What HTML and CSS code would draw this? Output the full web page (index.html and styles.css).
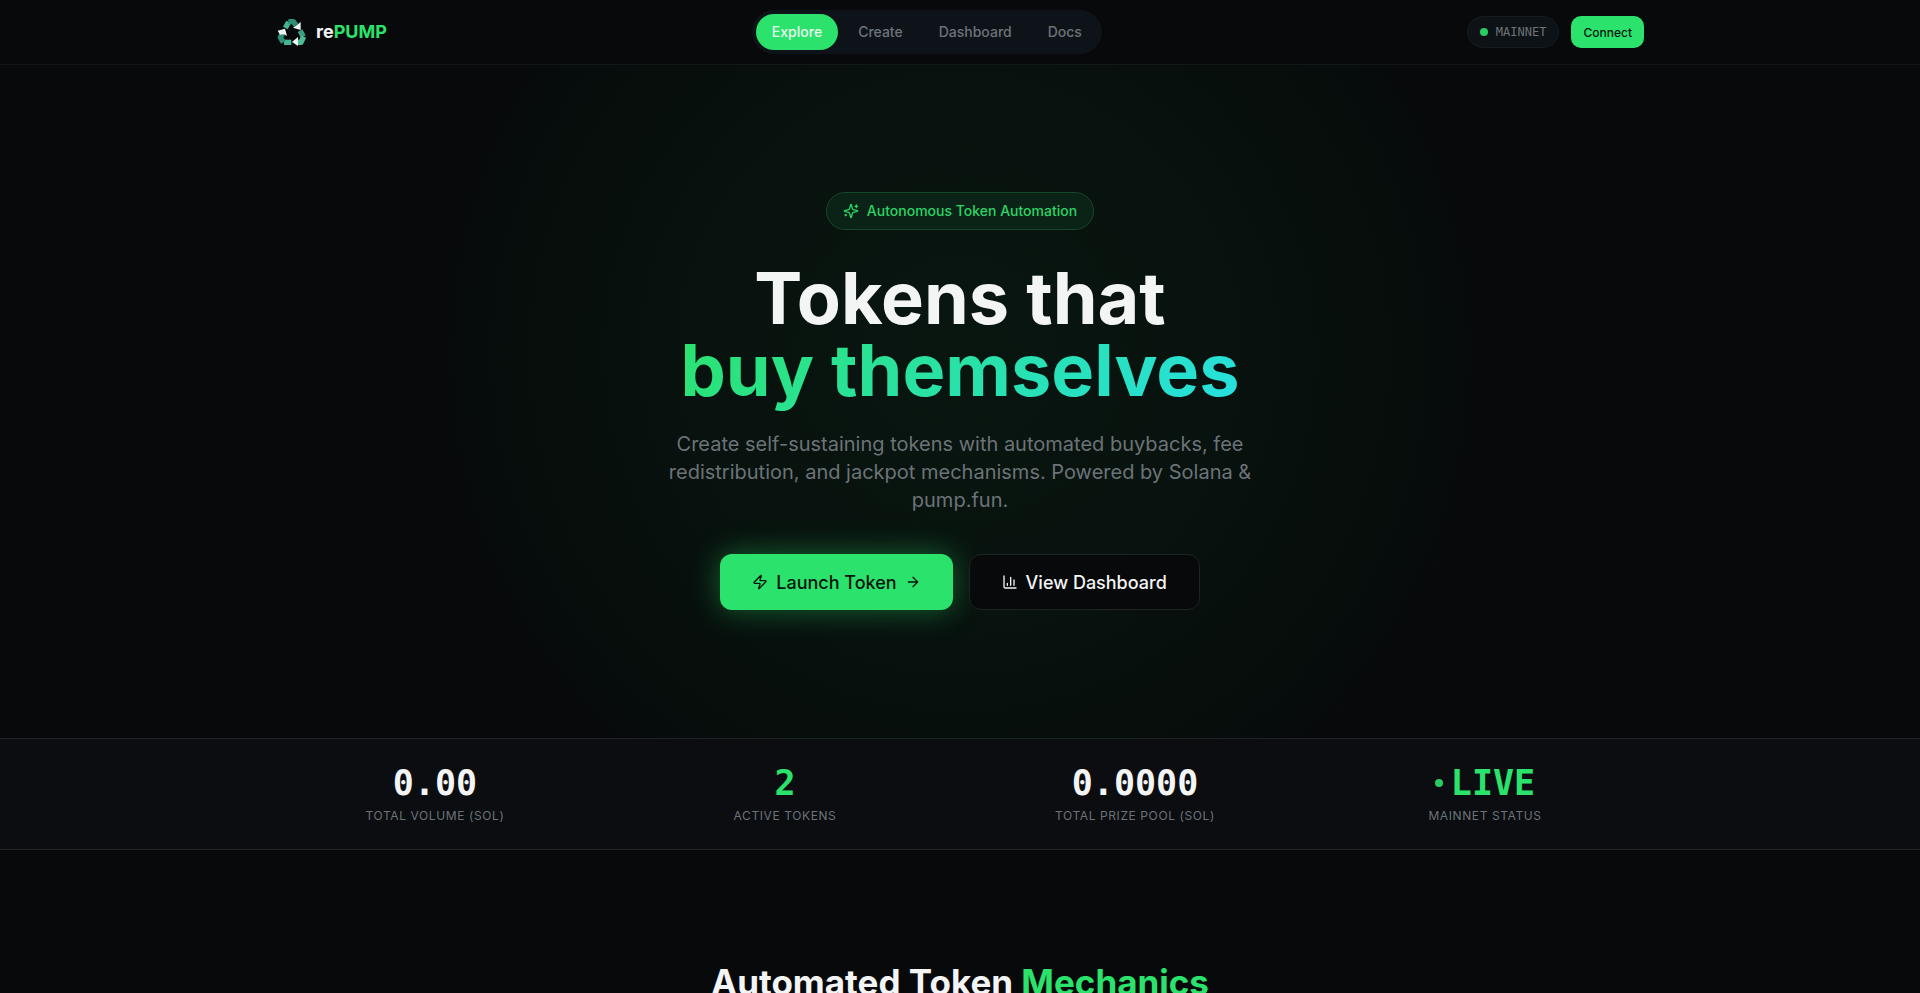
FILE: index.html
```html
<!DOCTYPE html>
<html lang="en">
<head>
<meta charset="utf-8">
<meta name="viewport" content="width=device-width, initial-scale=1">
<title>rePUMP</title>
<link rel="stylesheet" href="styles.css">
</head>
<body>
<header class="site-header">
  <div class="container header-row">
    <a class="logo" href="#">
      <svg class="logo-mark" viewBox="18 18 96 96" aria-hidden="true">
        <g fill="none" stroke-width="16" stroke-linejoin="round">
          <path d="M46 54 56 36" stroke="#46b595"/>
          <path d="M55 35H70L78 46" stroke="#2d8f76"/>
          <path d="M90 62 100 80" stroke="#3a9f84"/>
          <path d="M101 80 93 97H84" stroke="#4dbd98"/>
          <path d="M64 97H42" stroke="#46b595"/>
          <path d="M40 97 31 82 38 70" stroke="#2d8f76"/>
        </g>
        <g fill="#eef5f2">
          <path d="M92 36 92 60 69 53 78 47Z"/>
          <path d="M23 62 45 56 51 78 42 73 30 74Z"/>
          <path d="M84 81V108L66 96Z"/>
        </g>
      </svg>
      <span class="logo-text">re<span class="accent">PUMP</span></span>
    </a>
    <nav class="nav">
      <a class="nav-link active" href="#">Explore</a>
      <a class="nav-link" href="#">Create</a>
      <a class="nav-link" href="#">Dashboard</a>
      <a class="nav-link" href="#">Docs</a>
    </nav>
    <div class="header-actions">
      <div class="network"><span class="dot"></span>MAINNET</div>
      <button class="connect" type="button">Connect</button>
    </div>
  </div>
</header>

<main>
  <section class="hero">
    <div class="badge">
      <svg class="icon" viewBox="0 0 24 24" aria-hidden="true"><path d="M9.937 15.5A2 2 0 0 0 8.5 14.063l-6.135-1.582a.5.5 0 0 1 0-.962L8.5 9.936A2 2 0 0 0 9.937 8.5l1.582-6.135a.5.5 0 0 1 .963 0L14.063 8.5A2 2 0 0 0 15.5 9.937l6.135 1.581a.5.5 0 0 1 0 .964L15.5 14.063a2 2 0 0 0-1.437 1.437l-1.582 6.135a.5.5 0 0 1-.963 0z"/><path d="M20 3v4M22 5h-4M4 17v2M5 18H3"/></svg>
      <span>Autonomous Token Automation</span>
    </div>
    <h1 class="title">Tokens that<br><span class="gradient">buy themselves</span></h1>
    <p class="lead">Create self-sustaining tokens with automated buybacks, fee redistribution, and jackpot mechanisms. Powered by Solana &amp; pump.fun.</p>
    <div class="cta">
      <button class="btn primary" type="button">
        <svg class="icon" viewBox="0 0 24 24" aria-hidden="true"><path d="M4 14a1 1 0 0 1-.78-1.63l9.9-10.2a.5.5 0 0 1 .86.46l-1.92 6.02A1 1 0 0 0 13 10h7a1 1 0 0 1 .78 1.63l-9.9 10.2a.5.5 0 0 1-.86-.46l1.92-6.02A1 1 0 0 0 11 14z"/></svg>
        Launch Token
        <svg class="icon" viewBox="0 0 24 24" aria-hidden="true"><path d="M5 12h14M12 5l7 7-7 7"/></svg>
      </button>
      <button class="btn outline" type="button">
        <svg class="icon" viewBox="0 0 24 24" aria-hidden="true"><path d="M3 3v16a2 2 0 0 0 2 2h16M18 17V9M13 17V5M8 17v-3"/></svg>
        View Dashboard
      </button>
    </div>
  </section>

  <section class="stats">
    <div class="container stats-grid">
      <div><div class="value">0.00</div><div class="label">Total Volume (SOL)</div></div>
      <div><div class="value accent">2</div><div class="label">Active Tokens</div></div>
      <div><div class="value">0.0000</div><div class="label">Total Prize Pool (SOL)</div></div>
      <div><div class="value accent"><span class="dot"></span>LIVE</div><div class="label">Mainnet Status</div></div>
    </div>
  </section>

  <section class="mechanics">
    <h2 class="section-title">Automated Token <span class="accent">Mechanics</span></h2>
  </section>
</main>
</body>
</html>
```
FILE: styles.css
```css
:root {
  --bg: #08090b;
  --text: #f3f4f4;
  --muted: #6c7378;
  --green: #2be36c;
  --mono: "DejaVu Sans Mono", monospace;
}

* { box-sizing: border-box; }

body {
  margin: 0;
  background: var(--bg);
  color: var(--text);
  font-family: Inter, sans-serif;
  overflow-x: hidden;
}

a { color: inherit; text-decoration: none; }
button { font-family: inherit; cursor: pointer; }

.accent { color: var(--green); }

.icon {
  width: 16px;
  height: 16px;
  flex: none;
  fill: none;
  stroke: currentColor;
  stroke-width: 2;
  stroke-linecap: round;
  stroke-linejoin: round;
}

.container {
  max-width: 1400px;
  margin: 0 auto;
  padding: 0 16px;
}

.dot {
  width: 8px;
  height: 8px;
  flex: none;
  border-radius: 50%;
  background: #28cc62;
}

.site-header { border-bottom: 1px solid #131719; }

.header-row {
  display: flex;
  align-items: center;
  justify-content: space-between;
  height: 64px;
}

.logo { display: flex; align-items: center; gap: 8px; }
.logo-mark { width: 32px; height: 32px; }
.logo-text { font-size: 18px; font-weight: 700; line-height: 28px; }

.nav {
  display: flex;
  gap: 4px;
  padding: 4px;
  border-radius: 24px;
  background: #0e131a;
}

.nav-link {
  padding: 8px 16px;
  border-radius: 18px;
  font-size: 14px;
  font-weight: 500;
  line-height: 20px;
  color: var(--muted);
}
.nav-link.active { background: var(--green); color: #e8fbef; }

.header-actions { display: flex; align-items: center; gap: 12px; }

.network {
  display: flex;
  align-items: center;
  gap: 8px;
  padding: 6px 12px;
  border: 1px solid #161b20;
  border-radius: 16px;
  background: #0d1217;
  font: 12px/18px var(--mono);
  color: var(--muted);
}

.connect {
  height: 32px;
  padding: 0 12px;
  border: 0;
  border-radius: 10px;
  background: var(--green);
  color: #07140c;
  font-size: 12px;
  font-weight: 500;
}

.hero {
  display: flex;
  flex-direction: column;
  align-items: center;
  padding: 127px 16px 128px;
  text-align: center;
  background: radial-gradient(circle 530px at 50% 43%, #091610, #08120e 50%, #060c0b 92%, var(--bg));
}

.badge {
  display: flex;
  align-items: center;
  gap: 8px;
  padding: 8px 16px;
  border: 1px solid #15462a;
  border-radius: 20px;
  background: #0b2317;
  color: #2cd467;
  font-size: 14px;
  font-weight: 500;
  line-height: 20px;
}

.title {
  margin: 32px 0 24px;
  font-size: 72px;
  font-weight: 700;
  line-height: 72px;
}

.gradient {
  background: linear-gradient(135deg, #2be36c, #27e0e2);
  -webkit-background-clip: text;
  background-clip: text;
  color: transparent;
}

.lead {
  max-width: 672px;
  margin: 0 0 40px;
  font-size: 20px;
  line-height: 28px;
  color: var(--muted);
}

.cta { display: flex; flex-wrap: wrap; justify-content: center; gap: 16px; }

.btn {
  display: flex;
  align-items: center;
  gap: 8px;
  height: 56px;
  padding: 0 32px;
  border: 0;
  border-radius: 12px;
  font-size: 18px;
  font-weight: 500;
}
.primary {
  background: var(--green);
  color: #07140c;
  box-shadow: 0 0 30px rgba(43, 227, 108, 0.4);
}
.outline {
  border: 1px solid #1b2422;
  background: var(--bg);
  color: var(--text);
}

.stats {
  padding: 24px 0;
  border-top: 1px solid #202326;
  border-bottom: 1px solid #202326;
  background: #0b0d11;
}

.stats-grid {
  display: grid;
  grid-template-columns: repeat(4, 1fr);
  gap: 32px;
  text-align: center;
}

.value {
  display: flex;
  align-items: center;
  justify-content: center;
  gap: 8px;
  font: 700 35px/40px var(--mono);
}

.label {
  margin-top: 4px;
  font-size: 12px;
  line-height: 18px;
  letter-spacing: 0.05em;
  text-transform: uppercase;
  color: var(--muted);
}

.mechanics { padding: 112px 16px; text-align: center; }

.section-title {
  margin: 0;
  font-size: 35px;
  font-weight: 700;
  line-height: 40px;
}
```
